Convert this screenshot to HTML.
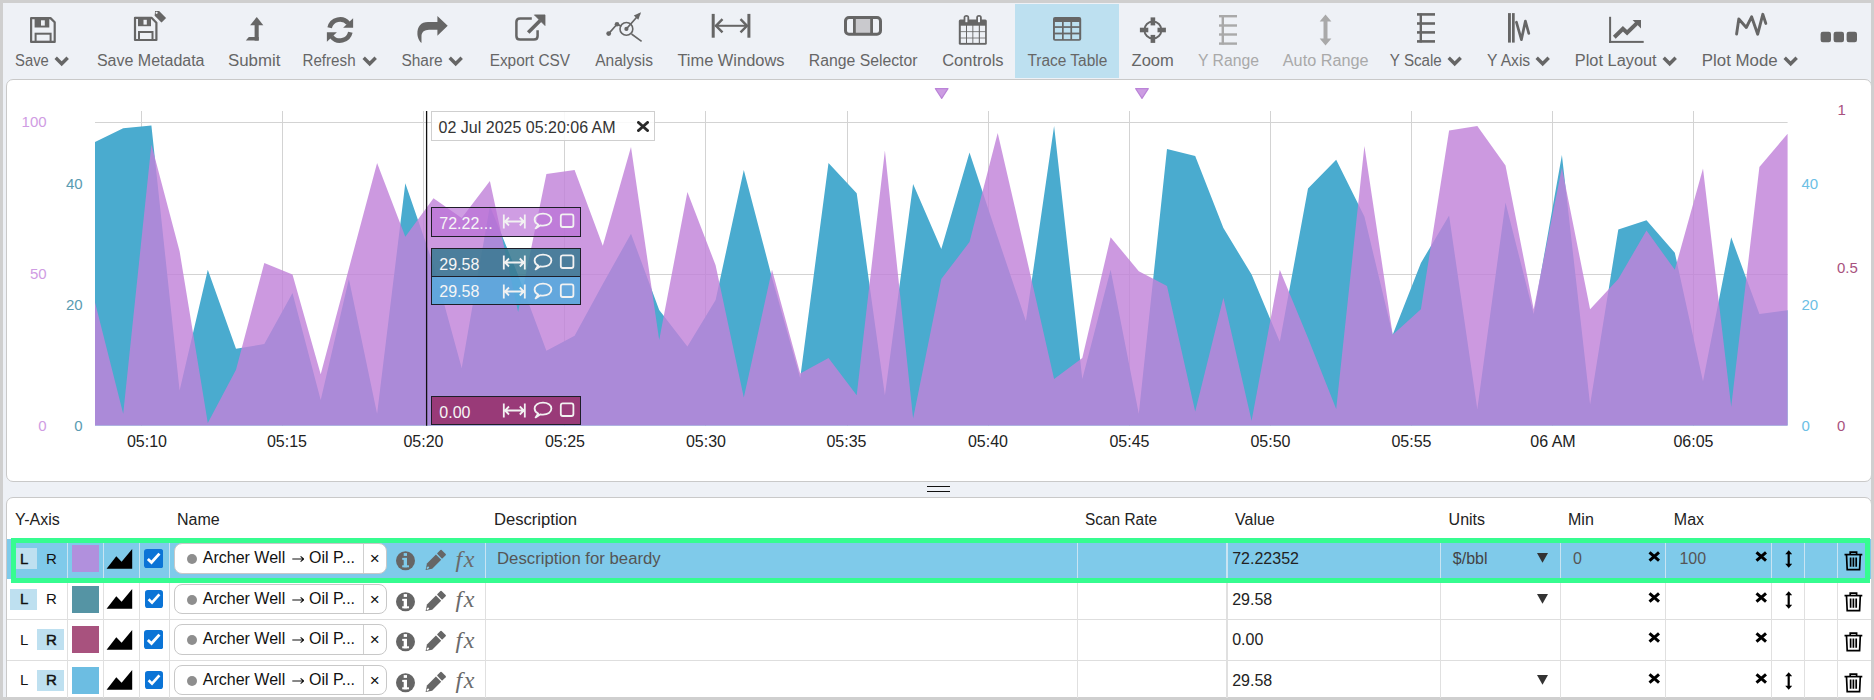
<!DOCTYPE html>
<html><head><meta charset="utf-8">
<style>
*{box-sizing:border-box}
html,body{margin:0;padding:0}
body{width:1874px;height:700px;overflow:hidden;background:#cfcfcf;position:relative;font-family:"Liberation Sans",sans-serif;font-size:16px;color:#222}
#inner{position:absolute;left:3px;top:3px;width:1868px;height:694px;background:#eef1f6}
.tl{position:absolute;top:51.6px;font-size:16px;line-height:18px;white-space:nowrap}
.chev{display:inline-block;margin-left:6px;vertical-align:0px}
#chartp{position:absolute;left:6px;top:79px;width:1866px;height:403px;background:#fff;border:1px solid #c9c9c9;border-radius:7px}
#tablep{position:absolute;left:6px;top:497px;width:1866px;height:210px;background:#fff;border:1px solid #c9c9c9;border-radius:7px}
.abs{position:absolute}
.t{position:absolute;white-space:nowrap;line-height:18px}
.al{position:absolute;font-size:15px;line-height:18px;white-space:nowrap}
.xl{position:absolute;top:433px;width:80px;text-align:center;font-size:16px;line-height:18px;color:#222}
.lg{position:absolute;left:431.3px;width:149.5px;border:1px solid #1e1e28}
.lg span{position:absolute;left:7px;top:6.5px;line-height:18px;color:#f6f6f6;font-size:16px}
.pill{position:absolute;left:174.3px;width:213px;height:30.5px;background:#fff;border:1px solid #c8c8c8;border-radius:8px}
.pill .dot{position:absolute;left:12px;top:10px;width:10px;height:10px;border-radius:50%;background:#8e8e8e}
.pill span{position:absolute;left:27.5px;top:5px;line-height:18px;color:#111;white-space:nowrap}
.pill .psep{position:absolute;left:188.2px;top:0;width:1px;height:100%;background:#cfcfcf}
.pill .px{position:absolute;left:188.5px;width:22px;top:5px;line-height:20px;text-align:center;font-size:17px;color:#111}
.fx{position:absolute;font-family:"Liberation Serif",serif;font-style:italic;font-size:24px;line-height:24px;color:#6a6a6a;letter-spacing:1.5px}
.pill .arr{position:absolute;left:116.6px;top:10.8px}
.pill span.oil{left:133.8px}
</style></head><body>
<div id="inner"></div>
<div id="chartp"></div>
<div id="tablep"></div>
<div class="abs" style="left:927px;top:486px;width:23px;height:1.1px;background:#111"></div>
<div class="abs" style="left:927px;top:491px;width:23px;height:1.1px;background:#111"></div>
<div class="abs" style="left:0;top:697px;width:1874px;height:3px;background:#cfcfcf"></div>
<div class="abs" style="left:1871px;top:0;width:3px;height:700px;background:#cfcfcf"></div>
<div class="abs" style="left:1015px;top:4px;width:104px;height:74px;background:#bde0f0"></div>
<svg class="abs" style="left:0;top:0" width="1874" height="80" viewBox="0 0 1874 80">
<g fill="#666" stroke="none">
<!-- Save -->
<path d="M31.1 18.1 H50.5 L54.7 22.3 V41.9 H31.1 Z" fill="none" stroke="#666" stroke-width="2.2" stroke-linejoin="round"/>
<rect x="34.6" y="18" width="14.7" height="9.5"/>
<rect x="41" y="20.3" width="3.8" height="5.3" fill="#eef1f6"/>
<rect x="35.6" y="33.7" width="15" height="8.2" fill="none" stroke="#666" stroke-width="2"/>
<!-- Save Metadata -->
<path d="M135 17.8 H151.5 L156.4 22.7 V40 H135 Z" fill="none" stroke="#666" stroke-width="2.2" stroke-linejoin="round"/>
<rect x="138" y="17.7" width="13" height="8.5"/>
<rect x="143.5" y="19.8" width="3.3" height="4.8" fill="#eef1f6"/>
<rect x="139" y="32" width="13.5" height="8" fill="none" stroke="#666" stroke-width="2"/>
<path d="M154.5 10.5 H159.5 L167 18 L161.5 23.5 L154 16 Z" stroke="#eef1f6" stroke-width="1.2"/>
<circle cx="156.6" cy="12.8" r="1.1" fill="#eef1f6"/>
<!-- Submit -->
<path d="M250.1 25.2 L256.8 16.9 L263.3 25.2 Z"/>
<rect x="254.6" y="24.8" width="4.1" height="15.8"/>
<path d="M245.8 40.6 L248.8 37 L258.7 37 L258.7 40.6 Z"/>
<!-- Refresh -->
<path d="M329.65 27.7 A10.6 10.6 0 0 1 348.3 23.4" fill="none" stroke="#666" stroke-width="4.6"/>
<path d="M353.1 18.3 L353.1 27.7 L343.1 27.7 Z"/>
<path d="M350.35 32.3 A10.6 10.6 0 0 1 331.7 36.6" fill="none" stroke="#666" stroke-width="4.6"/>
<path d="M326.9 41.7 L326.9 32.3 L336.9 32.3 Z"/>
<!-- Share -->
<path d="M437.4 16 L447.7 25.8 L437.4 35.7 V29.7 H429 C424.6 29.9 421.7 31.8 421.5 35.8 C421.4 38.4 421.6 40.8 421.5 43 C420.2 42.2 417.6 38.6 417.4 34.2 C417.1 26.6 421 22 428 22 H437.4 Z"/>
<!-- Export CSV -->
<path d="M531.8 18.5 H520 Q516.4 18.5 516.4 22.1 V36 Q516.4 39.6 520 39.6 H534 Q537.6 39.6 537.6 36 V30.2" fill="none" stroke="#666" stroke-width="2.5"/>
<path d="M528.2 32.4 L540.2 20.4" fill="none" stroke="#666" stroke-width="3.6"/>
<path d="M534.4 14.9 L545 14.9 L545 25.5 Z" stroke="#666" stroke-width="0.8" stroke-linejoin="round"/>
<!-- Analysis -->
<path d="M608.7 33.6 L617 24.3 L621.5 26.3 M626.4 28.9 L640 13.5 M631.5 34 L641.6 41.3" fill="none" stroke="#666" stroke-width="1.6"/>
<circle cx="608.7" cy="33.6" r="2.4"/><circle cx="617" cy="24.3" r="2.3"/><circle cx="626.4" cy="28.9" r="2.1"/>
<circle cx="626.4" cy="28.9" r="6.4" fill="none" stroke="#666" stroke-width="1.6"/>
<path d="M641 12.3 L633.8 15.5 L638.3 19.8 Z"/>
<!-- Time Windows -->
<rect x="711.7" y="13.9" width="3" height="23.8"/><rect x="747.4" y="13.9" width="3" height="23.8"/>
<path d="M715 25.8 H747" fill="none" stroke="#666" stroke-width="2"/>
<path d="M722.5 19.2 L716 25.8 L722.5 32.4 M740.5 19.2 L747 25.8 L740.5 32.4" fill="none" stroke="#666" stroke-width="2.4"/>
<!-- Range Selector -->
<rect x="854.5" y="18" width="17" height="16" fill="#c9c9cd"/>
<rect x="845.5" y="17.5" width="35" height="16.8" rx="3.5" fill="none" stroke="#666" stroke-width="3"/>
<rect x="853" y="17" width="2.8" height="18"/><rect x="870.2" y="17" width="2.8" height="18"/>
<!-- Controls -->
<rect x="958.8" y="19.6" width="28" height="25.2" rx="1.5"/>
<g fill="#eef1f6"><rect x="960.8" y="25.7" width="5.2" height="5.6"/><rect x="967" y="25.7" width="5.4" height="5.6"/><rect x="973.3" y="25.7" width="5.5" height="5.6"/><rect x="979.9" y="25.7" width="5.2" height="5.6"/><rect x="960.8" y="32.1" width="5.2" height="5.5"/><rect x="967" y="32.1" width="5.4" height="5.5"/><rect x="973.3" y="32.1" width="5.5" height="5.5"/><rect x="979.9" y="32.1" width="5.2" height="5.5"/><rect x="960.8" y="38.4" width="5.2" height="4.5"/><rect x="967" y="38.4" width="5.4" height="4.5"/><rect x="973.3" y="38.4" width="5.5" height="4.5"/><rect x="979.9" y="38.4" width="5.2" height="4.5"/></g>
<rect x="963.6" y="15" width="5.6" height="8.6" rx="2.8"/><rect x="976.2" y="15" width="5.6" height="8.6" rx="2.8"/>
<rect x="965.4" y="16.8" width="2" height="5.4" fill="#eef1f6"/><rect x="978" y="16.8" width="2" height="5.4" fill="#eef1f6"/>
<!-- Trace Table -->
<rect x="1053" y="17.1" width="28.2" height="23.7" rx="2"/>
<g fill="#bde0f0"><rect x="1054.9" y="22" width="7.1" height="4.2"/><rect x="1063.7" y="22" width="6.7" height="4.2"/><rect x="1072.1" y="22" width="7.1" height="4.2"/><rect x="1054.9" y="27.9" width="7.1" height="4.7"/><rect x="1063.7" y="27.9" width="6.7" height="4.7"/><rect x="1072.1" y="27.9" width="7.1" height="4.7"/><rect x="1054.9" y="34.4" width="7.1" height="4.7"/><rect x="1063.7" y="34.4" width="6.7" height="4.7"/><rect x="1072.1" y="34.4" width="7.1" height="4.7"/></g>
<!-- Zoom -->
<circle cx="1152.9" cy="30" r="8.5" fill="none" stroke="#666" stroke-width="1.9"/>
<rect x="1150.6" y="17.4" width="4.6" height="8"/><rect x="1150.6" y="34.9" width="4.6" height="8"/>
<rect x="1139.9" y="27.7" width="8.4" height="4.6"/><rect x="1157.5" y="27.7" width="8.4" height="4.6"/>
<!-- Y Range (disabled) -->
<g fill="#a9a9a9">
<rect x="1221.6" y="15.5" width="2.4" height="29"/>
<rect x="1219" y="15" width="18" height="2.4"/><rect x="1219" y="24.3" width="18" height="2.4"/><rect x="1219" y="33.3" width="18" height="2.4"/><rect x="1219" y="42.4" width="18" height="2.4"/>
<!-- Auto Range -->
<path d="M1325.5 14.6 L1331.4 21.5 L1319.7 21.5 Z M1325.5 45.5 L1331.4 38.6 L1319.7 38.6 Z"/>
<rect x="1323.5" y="20" width="4" height="20"/>
</g>
<!-- Y Scale -->
<rect x="1419.6" y="13.5" width="2.4" height="29"/>
<rect x="1417" y="13.1" width="18" height="2.6"/><rect x="1417" y="22.2" width="18" height="2.6"/><rect x="1417" y="31.1" width="18" height="2.6"/><rect x="1417" y="40.1" width="18" height="2.6"/>
<!-- Y Axis -->
<rect x="1508" y="13.1" width="2.9" height="29.5"/><rect x="1512" y="13.1" width="2.7" height="29.5"/>
<path d="M1516.4 22.2 L1521.4 39.6 L1525.4 21 L1528.8 33.4" fill="none" stroke="#666" stroke-width="2.7" stroke-linejoin="round" stroke-linecap="round"/>
<!-- Plot Layout -->
<rect x="1609.1" y="16.8" width="2" height="26.1"/><rect x="1609.1" y="40.9" width="34.6" height="2"/>
<path d="M1614.3 37.2 L1622.9 28.8 L1627.1 32.8 L1637.5 22.6" fill="none" stroke="#666" stroke-width="4"/>
<path d="M1632.6 20 H1641 V28.4 Z"/>
<!-- Plot Mode -->
<path d="M1736.6 34 L1738.8 19 L1746.3 27.5 L1751.6 16.8 L1757.7 34.2 L1762.8 14.3 L1765.8 23.4" fill="none" stroke="#666" stroke-width="2.9" stroke-linejoin="round" stroke-linecap="round"/>
<!-- more -->
<rect x="1820.6" y="31.8" width="10.4" height="10.4" rx="2.2"/><rect x="1833.6" y="31.8" width="10.4" height="10.4" rx="2.2"/><rect x="1846.6" y="31.8" width="10.4" height="10.4" rx="2.2"/>
</g>
</svg>
<div class="tl" style="left:16.00px;color:#666;transform:translateX(-0.92px) scaleX(0.9250);transform-origin:0 0">Save</div>
<div class="tl" style="left:97.30px;color:#666;transform:translateX(-0.40px) scaleX(1.0000);transform-origin:0 0">Save Metadata</div>
<div class="tl" style="left:229.00px;color:#666;transform:translateX(-1.05px) scaleX(1.0531);transform-origin:0 0">Submit</div>
<div class="tl" style="left:303.20px;color:#666;transform:translateX(-0.56px) scaleX(0.9484);transform-origin:0 0">Refresh</div>
<div class="tl" style="left:401.70px;color:#666;transform:translateX(-0.59px) scaleX(0.9667);transform-origin:0 0">Share</div>
<div class="tl" style="left:490.80px;color:#666;transform:translateX(-1.35px) scaleX(0.9615);transform-origin:0 0">Export CSV</div>
<div class="tl" style="left:595.10px;color:#666;transform:translateX(0.20px) scaleX(0.9695);transform-origin:0 0">Analysis</div>
<div class="tl" style="left:677.70px;color:#666;transform:translateX(-0.61px) scaleX(1.0269);transform-origin:0 0">Time Windows</div>
<div class="tl" style="left:809.40px;color:#666;transform:translateX(-0.19px) scaleX(0.9855);transform-origin:0 0">Range Selector</div>
<div class="tl" style="left:942.60px;color:#666;transform:translateX(-0.81px) scaleX(1.0306);transform-origin:0 0">Controls</div>
<div class="tl" style="left:1027.70px;color:#666;transform:translateX(-0.59px) scaleX(0.9659);transform-origin:0 0">Trace Table</div>
<div class="tl" style="left:1131.80px;color:#666;transform:translateX(-0.40px) scaleX(1.0301);transform-origin:0 0">Zoom</div>
<div class="tl" style="left:1199.00px;color:#a9a9a9;transform:translateX(-0.98px) scaleX(0.9833);transform-origin:0 0">Y Range</div>
<div class="tl" style="left:1282.90px;color:#a9a9a9;transform:translateX(-0.20px) scaleX(1.0143);transform-origin:0 0">Auto Range</div>
<div class="tl" style="left:1390.40px;color:#666;transform:translateX(-0.17px) scaleX(0.9472);transform-origin:0 0">Y Scale</div>
<div class="tl" style="left:1486.50px;color:#666;transform:translateX(-0.00px) scaleX(0.9773);transform-origin:0 0">Y Axis</div>
<div class="tl" style="left:1575.40px;color:#666;transform:translateX(-0.21px) scaleX(1.0226);transform-origin:0 0">Plot Layout</div>
<div class="tl" style="left:1702.40px;color:#666;transform:translateX(-0.23px) scaleX(1.0535);transform-origin:0 0">Plot Mode</div>
<svg class="abs" style="left:54.4px;top:55.5px" width="15.4" height="11" viewBox="0 0 15.4 11"><path d="M1.7 1.8 L7.7 7.8 L13.7 1.8" fill="none" stroke="#666" stroke-width="3.4"/></svg>
<svg class="abs" style="left:361.5px;top:55.5px" width="15.4" height="11" viewBox="0 0 15.4 11"><path d="M1.7 1.8 L7.7 7.8 L13.7 1.8" fill="none" stroke="#666" stroke-width="3.4"/></svg>
<svg class="abs" style="left:447.5px;top:55.5px" width="15.4" height="11" viewBox="0 0 15.4 11"><path d="M1.7 1.8 L7.7 7.8 L13.7 1.8" fill="none" stroke="#666" stroke-width="3.4"/></svg>
<svg class="abs" style="left:1446.6px;top:55.5px" width="15.4" height="11" viewBox="0 0 15.4 11"><path d="M1.7 1.8 L7.7 7.8 L13.7 1.8" fill="none" stroke="#666" stroke-width="3.4"/></svg>
<svg class="abs" style="left:1535.3px;top:55.5px" width="15.4" height="11" viewBox="0 0 15.4 11"><path d="M1.7 1.8 L7.7 7.8 L13.7 1.8" fill="none" stroke="#666" stroke-width="3.4"/></svg>
<svg class="abs" style="left:1662.2px;top:55.5px" width="15.4" height="11" viewBox="0 0 15.4 11"><path d="M1.7 1.8 L7.7 7.8 L13.7 1.8" fill="none" stroke="#666" stroke-width="3.4"/></svg>
<svg class="abs" style="left:1782.9px;top:55.5px" width="15.4" height="11" viewBox="0 0 15.4 11"><path d="M1.7 1.8 L7.7 7.8 L13.7 1.8" fill="none" stroke="#666" stroke-width="3.4"/></svg><svg class="abs" style="left:0;top:0" width="1874" height="500" viewBox="0 0 1874 500">
<g stroke="#d3d3d3" stroke-width="1"><line x1="95" y1="122.5" x2="1787.6" y2="122.5"/><line x1="95" y1="274.5" x2="1787.6" y2="274.5"/><line x1="141.5" y1="111" x2="141.5" y2="425.5"/><line x1="282.5" y1="111" x2="282.5" y2="425.5"/><line x1="423.5" y1="111" x2="423.5" y2="425.5"/><line x1="564.5" y1="111" x2="564.5" y2="425.5"/><line x1="705.5" y1="111" x2="705.5" y2="425.5"/><line x1="847.5" y1="111" x2="847.5" y2="425.5"/><line x1="988.5" y1="111" x2="988.5" y2="425.5"/><line x1="1129.5" y1="111" x2="1129.5" y2="425.5"/><line x1="1270.5" y1="111" x2="1270.5" y2="425.5"/><line x1="1411.5" y1="111" x2="1411.5" y2="425.5"/><line x1="1552.5" y1="111" x2="1552.5" y2="425.5"/><line x1="1693.5" y1="111" x2="1693.5" y2="425.5"/></g>
<polygon points="95.0,425.5 95.0,142.1 123.2,128.2 151.4,125.4 179.6,390.6 207.8,269.8 236.0,348.8 264.3,344.1 292.5,293.0 320.7,399.9 348.9,279.0 377.1,413.8 405.3,183.2 433.5,265.0 461.7,367.9 489.9,206.0 518.1,275.0 546.4,350.7 574.6,335.7 602.8,284.0 631.0,233.7 659.2,310.0 687.4,346.5 715.6,300.0 743.8,170.0 772.0,277.7 800.2,378.0 828.5,163.0 856.7,193.2 884.9,395.2 913.1,184.0 941.3,249.0 969.5,152.4 997.7,237.3 1025.9,321.0 1054.1,125.9 1082.3,379.0 1110.6,269.8 1138.8,413.8 1167.0,149.1 1195.2,156.1 1223.4,228.0 1251.6,274.5 1279.8,341.8 1308.0,188.6 1336.2,159.8 1364.4,216.4 1392.7,334.8 1420.9,262.9 1449.1,215.5 1477.3,409.1 1505.5,202.5 1533.7,314.0 1561.9,155.1 1590.1,404.5 1618.3,229.4 1646.5,220.2 1674.8,252.7 1703.0,381.3 1731.2,237.3 1759.4,314.0 1787.6,310.2 1787.6,425.5" fill="#4aabcf"/>
<polygon points="95.0,425.5 95.0,302.3 123.2,413.8 151.4,144.5 179.6,251.3 207.8,423.0 236.0,369.7 264.3,262.9 292.5,274.5 320.7,374.3 348.9,268.5 377.1,163.0 405.3,236.8 433.5,198.2 461.7,218.0 489.9,181.0 518.1,312.0 546.4,174.1 574.6,169.9 602.8,245.7 631.0,147.1 659.2,340.0 687.4,192.1 715.6,265.2 743.8,397.5 772.0,269.8 800.2,373.4 828.5,358.0 856.7,395.2 884.9,150.5 913.1,418.4 941.3,279.1 969.5,242.0 997.7,132.9 1025.9,255.0 1054.1,379.0 1082.3,358.0 1110.6,237.3 1138.8,271.2 1167.0,286.1 1195.2,411.5 1223.4,297.7 1251.6,420.8 1279.8,269.8 1308.0,338.0 1336.2,409.0 1364.4,145.9 1392.7,334.8 1420.9,309.3 1449.1,130.5 1477.3,125.9 1505.5,165.4 1533.7,309.3 1561.9,167.7 1590.1,309.3 1618.3,279.1 1646.5,230.4 1674.8,269.8 1703.0,168.5 1731.2,406.8 1759.4,167.0 1787.6,133.8 1787.6,425.5" fill="#c183d9" fill-opacity="0.82"/>
<line x1="426.6" y1="111" x2="426.6" y2="425.7" stroke="#111" stroke-width="1.3"/>
<path d="M935.4000000000001 88.6 H948.0 L941.7 98.4 Z" fill="#cc9de2" stroke="#bb84d8" stroke-width="1.2" stroke-linejoin="round"/>
<path d="M1135.7 88.6 H1148.3 L1142 98.4 Z" fill="#cc9de2" stroke="#bb84d8" stroke-width="1.2" stroke-linejoin="round"/>
</svg>
<div class="al" style="right:1827.4px;top:113.0px;color:#cf9ce3">100</div>
<div class="al" style="right:1827.4px;top:265.0px;color:#cf9ce3">50</div>
<div class="al" style="right:1827.4px;top:417.0px;color:#cf9ce3">0</div>
<div class="al" style="right:1791.4px;top:175.0px;color:#5a9bb1">40</div>
<div class="al" style="right:1791.4px;top:296.0px;color:#5a9bb1">20</div>
<div class="al" style="right:1791.4px;top:417.0px;color:#5a9bb1">0</div>
<div class="al" style="left:1801.5px;top:175.0px;color:#6cc0e5">40</div>
<div class="al" style="left:1801.5px;top:296.0px;color:#6cc0e5">20</div>
<div class="al" style="left:1801.5px;top:417.0px;color:#6cc0e5">0</div>
<div class="al" style="left:1837.5px;top:101.0px;color:#a8527e">1</div>
<div class="al" style="left:1837.0px;top:259.0px;color:#a8527e">0.5</div>
<div class="al" style="left:1837.0px;top:417.0px;color:#a8527e">0</div>
<div class="xl" style="left:107px">05:10</div>
<div class="xl" style="left:247px">05:15</div>
<div class="xl" style="left:383.5px">05:20</div>
<div class="xl" style="left:525px">05:25</div>
<div class="xl" style="left:666px">05:30</div>
<div class="xl" style="left:806.5px">05:35</div>
<div class="xl" style="left:948px">05:40</div>
<div class="xl" style="left:1089.5px">05:45</div>
<div class="xl" style="left:1230.5px">05:50</div>
<div class="xl" style="left:1371.5px">05:55</div>
<div class="xl" style="left:1513px">06 AM</div>
<div class="xl" style="left:1653.5px">06:05</div><div class="abs" style="left:431.4px;top:111.4px;width:223.2px;height:29.2px;border:1px solid #cfcfcf;background:rgba(255,255,255,0.85)"></div>
<div class="t" style="left:438.6px;top:119px;color:#333">02 Jul 2025 05:20:06 AM</div>
<svg class="abs" style="left:637px;top:121px" width="12" height="11" viewBox="0 0 12 11"><path d="M1.5 1.5 L10.5 9.5 M10.5 1.5 L1.5 9.5" stroke="#2a2a2a" stroke-width="3" stroke-linecap="round"/></svg>
<div class="lg" style="top:207.4px;height:29.4px;background:rgba(184,110,214,0.68)"><span>72.22...</span></div>
<div class="lg" style="top:248.3px;height:28.4px;background:rgba(58,122,146,0.88)"><span>29.58</span></div>
<div class="lg" style="top:276.5px;height:28.8px;border-top:none;background:rgba(90,168,220,0.92)"><span>29.58</span></div>
<div class="lg" style="top:396.3px;height:29.2px;background:#993a78"><span>0.00</span></div>
<svg class="abs" style="left:500px;top:207.4px" width="80" height="30" viewBox="0 0 80 30">
<g fill="none" stroke="#f2f2f2" stroke-width="1.8">
<path d="M3.8 7.5 V21.5 M24.8 7.5 V21.5 M4.5 14.5 H24 M9 10.5 L5 14.5 L9 18.5 M19.8 10.5 L23.8 14.5 L19.8 18.5"/>
<path d="M38.2 17.6 C35.6 16.4 34.6 14.6 34.6 12.6 C34.6 9 38.3 6.6 43 6.6 C47.7 6.6 51.4 9 51.4 12.6 C51.4 16.2 47.7 18.6 43 18.6 C42 18.6 41.2 18.5 40.4 18.3 L35.6 21.4 Z" stroke-linejoin="round"/>
<rect x="60.8" y="7.4" width="12.6" height="12.6" rx="2"/>
</g></svg>
<svg class="abs" style="left:500px;top:248.3px" width="80" height="30" viewBox="0 0 80 30">
<g fill="none" stroke="#f2f2f2" stroke-width="1.8">
<path d="M3.8 7.5 V21.5 M24.8 7.5 V21.5 M4.5 14.5 H24 M9 10.5 L5 14.5 L9 18.5 M19.8 10.5 L23.8 14.5 L19.8 18.5"/>
<path d="M38.2 17.6 C35.6 16.4 34.6 14.6 34.6 12.6 C34.6 9 38.3 6.6 43 6.6 C47.7 6.6 51.4 9 51.4 12.6 C51.4 16.2 47.7 18.6 43 18.6 C42 18.6 41.2 18.5 40.4 18.3 L35.6 21.4 Z" stroke-linejoin="round"/>
<rect x="60.8" y="7.4" width="12.6" height="12.6" rx="2"/>
</g></svg>
<svg class="abs" style="left:500px;top:276.5px" width="80" height="30" viewBox="0 0 80 30">
<g fill="none" stroke="#f2f2f2" stroke-width="1.8">
<path d="M3.8 7.5 V21.5 M24.8 7.5 V21.5 M4.5 14.5 H24 M9 10.5 L5 14.5 L9 18.5 M19.8 10.5 L23.8 14.5 L19.8 18.5"/>
<path d="M38.2 17.6 C35.6 16.4 34.6 14.6 34.6 12.6 C34.6 9 38.3 6.6 43 6.6 C47.7 6.6 51.4 9 51.4 12.6 C51.4 16.2 47.7 18.6 43 18.6 C42 18.6 41.2 18.5 40.4 18.3 L35.6 21.4 Z" stroke-linejoin="round"/>
<rect x="60.8" y="7.4" width="12.6" height="12.6" rx="2"/>
</g></svg>
<svg class="abs" style="left:500px;top:396.3px" width="80" height="30" viewBox="0 0 80 30">
<g fill="none" stroke="#f2f2f2" stroke-width="1.8">
<path d="M3.8 7.5 V21.5 M24.8 7.5 V21.5 M4.5 14.5 H24 M9 10.5 L5 14.5 L9 18.5 M19.8 10.5 L23.8 14.5 L19.8 18.5"/>
<path d="M38.2 17.6 C35.6 16.4 34.6 14.6 34.6 12.6 C34.6 9 38.3 6.6 43 6.6 C47.7 6.6 51.4 9 51.4 12.6 C51.4 16.2 47.7 18.6 43 18.6 C42 18.6 41.2 18.5 40.4 18.3 L35.6 21.4 Z" stroke-linejoin="round"/>
<rect x="60.8" y="7.4" width="12.6" height="12.6" rx="2"/>
</g></svg><div class="t" style="left:15px;top:510.5px;color:#222">Y-Axis</div>
<div class="t" style="left:177px;top:510.5px;color:#222">Name</div>
<div class="t" style="left:493.5px;top:510.5px;color:#222;transform:scaleX(1.038);transform-origin:0 0">Description</div>
<div class="t" style="left:1084.5px;top:510.5px;color:#222;transform:scaleX(0.964);transform-origin:0 0">Scan Rate</div>
<div class="t" style="left:1235px;top:510.5px;color:#222">Value</div>
<div class="t" style="left:1448.6px;top:510.5px;color:#222">Units</div>
<div class="t" style="left:1568px;top:510.5px;color:#222">Min</div>
<div class="t" style="left:1673.8px;top:510.5px;color:#222">Max</div>
<div class="abs" style="left:7px;top:538.6px;width:1864px;height:40.4px;background:#7fcaea"></div>
<div class="abs" style="left:7px;top:618.8px;width:1864px;height:1px;background:#dedede"></div>
<div class="abs" style="left:7px;top:659.7px;width:1864px;height:1px;background:#dedede"></div>
<div class="abs" style="left:66.80000000000001px;top:538.6px;width:1.2px;height:40px;background:#c8e4f2"></div>
<div class="abs" style="left:66.80000000000001px;top:582.6px;width:1.2px;height:115px;background:#e0e0e0"></div>
<div class="abs" style="left:102.80000000000001px;top:538.6px;width:1.2px;height:40px;background:#c8e4f2"></div>
<div class="abs" style="left:102.80000000000001px;top:582.6px;width:1.2px;height:115px;background:#e0e0e0"></div>
<div class="abs" style="left:138.8px;top:538.6px;width:1.2px;height:40px;background:#c8e4f2"></div>
<div class="abs" style="left:138.8px;top:582.6px;width:1.2px;height:115px;background:#e0e0e0"></div>
<div class="abs" style="left:169.1px;top:538.6px;width:1.2px;height:40px;background:#c8e4f2"></div>
<div class="abs" style="left:169.1px;top:582.6px;width:1.2px;height:115px;background:#e0e0e0"></div>
<div class="abs" style="left:485.09999999999997px;top:538.6px;width:1.2px;height:40px;background:#c8e4f2"></div>
<div class="abs" style="left:485.09999999999997px;top:582.6px;width:1.2px;height:115px;background:#e0e0e0"></div>
<div class="abs" style="left:1077.1000000000001px;top:538.6px;width:1.2px;height:40px;background:#c8e4f2"></div>
<div class="abs" style="left:1077.1000000000001px;top:582.6px;width:1.2px;height:115px;background:#e0e0e0"></div>
<div class="abs" style="left:1226.4px;top:538.6px;width:1.2px;height:40px;background:#c8e4f2"></div>
<div class="abs" style="left:1226.4px;top:582.6px;width:1.2px;height:115px;background:#e0e0e0"></div>
<div class="abs" style="left:1440.0px;top:538.6px;width:1.2px;height:40px;background:#c8e4f2"></div>
<div class="abs" style="left:1440.0px;top:582.6px;width:1.2px;height:115px;background:#e0e0e0"></div>
<div class="abs" style="left:1559.8000000000002px;top:538.6px;width:1.2px;height:40px;background:#c8e4f2"></div>
<div class="abs" style="left:1559.8000000000002px;top:582.6px;width:1.2px;height:115px;background:#e0e0e0"></div>
<div class="abs" style="left:1664.7px;top:538.6px;width:1.2px;height:40px;background:#c8e4f2"></div>
<div class="abs" style="left:1664.7px;top:582.6px;width:1.2px;height:115px;background:#e0e0e0"></div>
<div class="abs" style="left:1770.9px;top:538.6px;width:1.2px;height:40px;background:#c8e4f2"></div>
<div class="abs" style="left:1770.9px;top:582.6px;width:1.2px;height:115px;background:#e0e0e0"></div>
<div class="abs" style="left:1803.9px;top:538.6px;width:1.2px;height:40px;background:#c8e4f2"></div>
<div class="abs" style="left:1803.9px;top:582.6px;width:1.2px;height:115px;background:#e0e0e0"></div>
<div class="abs" style="left:1836.7px;top:538.6px;width:1.2px;height:40px;background:#c8e4f2"></div>
<div class="abs" style="left:1836.7px;top:582.6px;width:1.2px;height:115px;background:#e0e0e0"></div>
<div class="abs" style="left:16px;top:547.9px;width:21px;height:21px;background:#bee0f0"></div>
<div class="t" style="left:20px;top:549.5px;font-size:15px;font-weight:normal;-webkit-text-stroke:0.45px #111;color:#111">L</div>
<div class="t" style="left:46px;top:549.5px;font-size:15px;font-weight:normal;color:#111">R</div>
<div class="abs" style="left:72px;top:545.0px;width:27px;height:27px;background:#b190dd"></div>
<svg class="abs" style="left:106px;top:548.5px" width="27" height="21" viewBox="0 0 27 21"><path d="M0.6 19.8 L10.3 7.3 L15.6 12.7 L26.2 0.1 V19.8 Z" fill="#000"/></svg>
<svg class="abs" style="left:144.15px;top:548.85px" width="19.3" height="19.3" viewBox="0 0 19 19"><rect x="0" y="0" width="19" height="19" rx="3" fill="#0b74d6"/><path d="M3.8 9.8 L7.4 13.3 L15.2 4.6" fill="none" stroke="#fff" stroke-width="2.8"/></svg>
<div class="pill" style="top:543.1px"><div class="dot"></div><span>Archer Well</span><svg class="arr" width="12.5" height="8" viewBox="0 0 12.5 8"><path d="M0.3 4 H11.6 M8.6 1.3 L11.7 4 L8.6 6.7" fill="none" stroke="#111" stroke-width="1.1"/></svg><span class="oil">Oil P...</span><div class="psep"></div><div class="px">×</div></div>
<svg class="abs" style="left:390px;top:545.0px" width="64" height="27" viewBox="0 0 64 27">
<circle cx="15.5" cy="15.7" r="9.5" fill="#666"/>
<g fill="#7fcaea"><rect x="13.7" y="8.1" width="3.3" height="2.8"/><rect x="12.2" y="12.9" width="4.8" height="2"/><rect x="13.7" y="12.9" width="3.3" height="9.4"/><rect x="12.2" y="20.3" width="6.8" height="2"/></g>
<g transform="translate(35.6 25) rotate(-45)" fill="#666">
<path d="M0 0 L5.6 -3.7 H18.3 V3.7 H5.6 Z"/>
<rect x="19.6" y="-3.7" width="5.9" height="7.4" rx="0.8"/>
<rect x="1.8" y="-0.9" width="2.6" height="1.8" fill="#7fcaea"/>
</g>
</svg>
<div class="fx" style="left:455.5px;top:546.5px">fx</div>
<div class="abs" style="left:10px;top:588.6px;width:27px;height:21px;background:#bee0f0"></div>
<div class="t" style="left:20px;top:590.2px;font-size:15px;font-weight:normal;-webkit-text-stroke:0.45px #111;color:#111">L</div>
<div class="t" style="left:46px;top:590.2px;font-size:15px;font-weight:normal;color:#111">R</div>
<div class="abs" style="left:72px;top:585.7px;width:27px;height:27px;background:#5594a4"></div>
<svg class="abs" style="left:106px;top:589.2px" width="27" height="21" viewBox="0 0 27 21"><path d="M0.6 19.8 L10.3 7.3 L15.6 12.7 L26.2 0.1 V19.8 Z" fill="#000"/></svg>
<svg class="abs" style="left:144.80px;top:590.20px" width="18" height="18" viewBox="0 0 19 19"><rect x="0" y="0" width="19" height="19" rx="3" fill="#0b74d6"/><path d="M3.8 9.8 L7.4 13.3 L15.2 4.6" fill="none" stroke="#fff" stroke-width="2.8"/></svg>
<div class="pill" style="top:583.8000000000001px"><div class="dot"></div><span>Archer Well</span><svg class="arr" width="12.5" height="8" viewBox="0 0 12.5 8"><path d="M0.3 4 H11.6 M8.6 1.3 L11.7 4 L8.6 6.7" fill="none" stroke="#111" stroke-width="1.1"/></svg><span class="oil">Oil P...</span><div class="psep"></div><div class="px">×</div></div>
<svg class="abs" style="left:390px;top:585.7px" width="64" height="27" viewBox="0 0 64 27">
<circle cx="15.5" cy="15.7" r="9.5" fill="#666"/>
<g fill="#fff"><rect x="13.7" y="8.1" width="3.3" height="2.8"/><rect x="12.2" y="12.9" width="4.8" height="2"/><rect x="13.7" y="12.9" width="3.3" height="9.4"/><rect x="12.2" y="20.3" width="6.8" height="2"/></g>
<g transform="translate(35.6 25) rotate(-45)" fill="#666">
<path d="M0 0 L5.6 -3.7 H18.3 V3.7 H5.6 Z"/>
<rect x="19.6" y="-3.7" width="5.9" height="7.4" rx="0.8"/>
<rect x="1.8" y="-0.9" width="2.6" height="1.8" fill="#fff"/>
</g>
</svg>
<div class="fx" style="left:455.5px;top:587.2px">fx</div>
<div class="abs" style="left:37px;top:629.0px;width:27px;height:21px;background:#bee0f0"></div>
<div class="t" style="left:20px;top:630.6px;font-size:15px;font-weight:normal;color:#111">L</div>
<div class="t" style="left:46px;top:630.6px;font-size:15px;font-weight:normal;-webkit-text-stroke:0.45px #111;color:#111">R</div>
<div class="abs" style="left:72px;top:626.1px;width:27px;height:27px;background:#a8527e"></div>
<svg class="abs" style="left:106px;top:629.6px" width="27" height="21" viewBox="0 0 27 21"><path d="M0.6 19.8 L10.3 7.3 L15.6 12.7 L26.2 0.1 V19.8 Z" fill="#000"/></svg>
<svg class="abs" style="left:144.15px;top:629.95px" width="19.3" height="19.3" viewBox="0 0 19 19"><rect x="0" y="0" width="19" height="19" rx="3" fill="#0b74d6"/><path d="M3.8 9.8 L7.4 13.3 L15.2 4.6" fill="none" stroke="#fff" stroke-width="2.8"/></svg>
<div class="pill" style="top:624.2px"><div class="dot"></div><span>Archer Well</span><svg class="arr" width="12.5" height="8" viewBox="0 0 12.5 8"><path d="M0.3 4 H11.6 M8.6 1.3 L11.7 4 L8.6 6.7" fill="none" stroke="#111" stroke-width="1.1"/></svg><span class="oil">Oil P...</span><div class="psep"></div><div class="px">×</div></div>
<svg class="abs" style="left:390px;top:626.1px" width="64" height="27" viewBox="0 0 64 27">
<circle cx="15.5" cy="15.7" r="9.5" fill="#666"/>
<g fill="#fff"><rect x="13.7" y="8.1" width="3.3" height="2.8"/><rect x="12.2" y="12.9" width="4.8" height="2"/><rect x="13.7" y="12.9" width="3.3" height="9.4"/><rect x="12.2" y="20.3" width="6.8" height="2"/></g>
<g transform="translate(35.6 25) rotate(-45)" fill="#666">
<path d="M0 0 L5.6 -3.7 H18.3 V3.7 H5.6 Z"/>
<rect x="19.6" y="-3.7" width="5.9" height="7.4" rx="0.8"/>
<rect x="1.8" y="-0.9" width="2.6" height="1.8" fill="#fff"/>
</g>
</svg>
<div class="fx" style="left:455.5px;top:627.6px">fx</div>
<div class="abs" style="left:37px;top:669.6px;width:27px;height:21px;background:#bee0f0"></div>
<div class="t" style="left:20px;top:671.2px;font-size:15px;font-weight:normal;color:#111">L</div>
<div class="t" style="left:46px;top:671.2px;font-size:15px;font-weight:normal;-webkit-text-stroke:0.45px #111;color:#111">R</div>
<div class="abs" style="left:72px;top:666.7px;width:27px;height:27px;background:#6cbde2"></div>
<svg class="abs" style="left:106px;top:670.2px" width="27" height="21" viewBox="0 0 27 21"><path d="M0.6 19.8 L10.3 7.3 L15.6 12.7 L26.2 0.1 V19.8 Z" fill="#000"/></svg>
<svg class="abs" style="left:144.80px;top:671.20px" width="18" height="18" viewBox="0 0 19 19"><rect x="0" y="0" width="19" height="19" rx="3" fill="#0b74d6"/><path d="M3.8 9.8 L7.4 13.3 L15.2 4.6" fill="none" stroke="#fff" stroke-width="2.8"/></svg>
<div class="pill" style="top:664.8000000000001px"><div class="dot"></div><span>Archer Well</span><svg class="arr" width="12.5" height="8" viewBox="0 0 12.5 8"><path d="M0.3 4 H11.6 M8.6 1.3 L11.7 4 L8.6 6.7" fill="none" stroke="#111" stroke-width="1.1"/></svg><span class="oil">Oil P...</span><div class="psep"></div><div class="px">×</div></div>
<svg class="abs" style="left:390px;top:666.7px" width="64" height="27" viewBox="0 0 64 27">
<circle cx="15.5" cy="15.7" r="9.5" fill="#666"/>
<g fill="#fff"><rect x="13.7" y="8.1" width="3.3" height="2.8"/><rect x="12.2" y="12.9" width="4.8" height="2"/><rect x="13.7" y="12.9" width="3.3" height="9.4"/><rect x="12.2" y="20.3" width="6.8" height="2"/></g>
<g transform="translate(35.6 25) rotate(-45)" fill="#666">
<path d="M0 0 L5.6 -3.7 H18.3 V3.7 H5.6 Z"/>
<rect x="19.6" y="-3.7" width="5.9" height="7.4" rx="0.8"/>
<rect x="1.8" y="-0.9" width="2.6" height="1.8" fill="#fff"/>
</g>
</svg>
<div class="fx" style="left:455.5px;top:668.2px">fx</div>
<div class="t" style="left:1232.2px;top:550.0px;color:#222">72.22352</div>
<svg class="abs" style="left:1536.6px;top:553.0px" width="11" height="10" viewBox="0 0 11 10"><path d="M0 0 H11 L5.5 9.8 Z" fill="#333"/></svg>
<svg class="abs" style="left:1648.2px;top:551.3px" width="12.5" height="11" viewBox="0 0 12.5 11"><path d="M1.5 1.3 L11 9.7 M11 1.3 L1.5 9.7" stroke="#000" stroke-width="3"/></svg>
<svg class="abs" style="left:1754.8px;top:551.3px" width="12.5" height="11" viewBox="0 0 12.5 11"><path d="M1.5 1.3 L11 9.7 M11 1.3 L1.5 9.7" stroke="#000" stroke-width="3"/></svg>
<svg class="abs" style="left:1784.6px;top:550.1px" width="7.4" height="18" viewBox="0 0 7.4 18"><path d="M3.7 0.3 L7.2 4.2 H4.8 V13.8 H7.2 L3.7 17.7 L0.2 13.8 H2.6 V4.2 H0.2 Z" fill="#000"/></svg>
<svg class="abs" style="left:1843.5px;top:551.0px" width="19" height="20" viewBox="0 0 19 20"><g fill="none" stroke="#000" stroke-width="1.7">
<path d="M0.5 3.6 H18.3"/><path d="M6.2 3.4 V1.2 H12.6 V3.4"/><path d="M2.5 3.8 L3.2 18.6 H15.6 L16.3 3.8"/><path d="M6.6 6.5 V15.8 M9.4 6.5 V15.8 M12.2 6.5 V15.8"/></g></svg>
<div class="t" style="left:1232.2px;top:590.7px;color:#222">29.58</div>
<svg class="abs" style="left:1536.6px;top:593.7px" width="11" height="10" viewBox="0 0 11 10"><path d="M0 0 H11 L5.5 9.8 Z" fill="#333"/></svg>
<svg class="abs" style="left:1648.2px;top:592.0px" width="12.5" height="11" viewBox="0 0 12.5 11"><path d="M1.5 1.3 L11 9.7 M11 1.3 L1.5 9.7" stroke="#000" stroke-width="3"/></svg>
<svg class="abs" style="left:1754.8px;top:592.0px" width="12.5" height="11" viewBox="0 0 12.5 11"><path d="M1.5 1.3 L11 9.7 M11 1.3 L1.5 9.7" stroke="#000" stroke-width="3"/></svg>
<svg class="abs" style="left:1784.6px;top:590.8000000000001px" width="7.4" height="18" viewBox="0 0 7.4 18"><path d="M3.7 0.3 L7.2 4.2 H4.8 V13.8 H7.2 L3.7 17.7 L0.2 13.8 H2.6 V4.2 H0.2 Z" fill="#000"/></svg>
<svg class="abs" style="left:1843.5px;top:591.7px" width="19" height="20" viewBox="0 0 19 20"><g fill="none" stroke="#000" stroke-width="1.7">
<path d="M0.5 3.6 H18.3"/><path d="M6.2 3.4 V1.2 H12.6 V3.4"/><path d="M2.5 3.8 L3.2 18.6 H15.6 L16.3 3.8"/><path d="M6.6 6.5 V15.8 M9.4 6.5 V15.8 M12.2 6.5 V15.8"/></g></svg>
<div class="t" style="left:1232.2px;top:631.1px;color:#222">0.00</div>
<svg class="abs" style="left:1648.2px;top:632.4px" width="12.5" height="11" viewBox="0 0 12.5 11"><path d="M1.5 1.3 L11 9.7 M11 1.3 L1.5 9.7" stroke="#000" stroke-width="3"/></svg>
<svg class="abs" style="left:1754.8px;top:632.4px" width="12.5" height="11" viewBox="0 0 12.5 11"><path d="M1.5 1.3 L11 9.7 M11 1.3 L1.5 9.7" stroke="#000" stroke-width="3"/></svg>
<svg class="abs" style="left:1843.5px;top:632.1px" width="19" height="20" viewBox="0 0 19 20"><g fill="none" stroke="#000" stroke-width="1.7">
<path d="M0.5 3.6 H18.3"/><path d="M6.2 3.4 V1.2 H12.6 V3.4"/><path d="M2.5 3.8 L3.2 18.6 H15.6 L16.3 3.8"/><path d="M6.6 6.5 V15.8 M9.4 6.5 V15.8 M12.2 6.5 V15.8"/></g></svg>
<div class="t" style="left:1232.2px;top:671.7px;color:#222">29.58</div>
<svg class="abs" style="left:1536.6px;top:674.7px" width="11" height="10" viewBox="0 0 11 10"><path d="M0 0 H11 L5.5 9.8 Z" fill="#333"/></svg>
<svg class="abs" style="left:1648.2px;top:673.0px" width="12.5" height="11" viewBox="0 0 12.5 11"><path d="M1.5 1.3 L11 9.7 M11 1.3 L1.5 9.7" stroke="#000" stroke-width="3"/></svg>
<svg class="abs" style="left:1754.8px;top:673.0px" width="12.5" height="11" viewBox="0 0 12.5 11"><path d="M1.5 1.3 L11 9.7 M11 1.3 L1.5 9.7" stroke="#000" stroke-width="3"/></svg>
<svg class="abs" style="left:1784.6px;top:671.8000000000001px" width="7.4" height="18" viewBox="0 0 7.4 18"><path d="M3.7 0.3 L7.2 4.2 H4.8 V13.8 H7.2 L3.7 17.7 L0.2 13.8 H2.6 V4.2 H0.2 Z" fill="#000"/></svg>
<svg class="abs" style="left:1843.5px;top:672.7px" width="19" height="20" viewBox="0 0 19 20"><g fill="none" stroke="#000" stroke-width="1.7">
<path d="M0.5 3.6 H18.3"/><path d="M6.2 3.4 V1.2 H12.6 V3.4"/><path d="M2.5 3.8 L3.2 18.6 H15.6 L16.3 3.8"/><path d="M6.6 6.5 V15.8 M9.4 6.5 V15.8 M12.2 6.5 V15.8"/></g></svg>
<div class="t" style="left:497.2px;top:550px;color:#555;transform:scaleX(1.046);transform-origin:0 0">Description for beardy</div>
<div class="t" style="left:1452.8px;top:550px;color:#444">$/bbl</div>
<div class="t" style="left:1573px;top:550px;color:#555">0</div>
<div class="t" style="left:1679.4px;top:550px;color:#555">100</div>
<div class="abs" style="left:11px;top:538.3px;width:1859.4px;height:44.5px;border:5px solid #36fc90"></div></body></html>
